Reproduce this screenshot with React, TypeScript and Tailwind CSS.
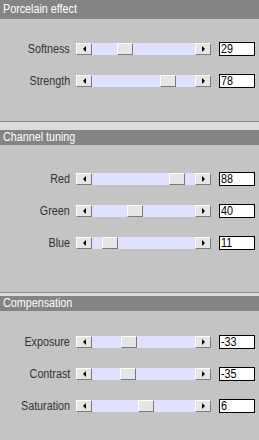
import React from "react";

const font = { fontFamily: '"Liberation Sans", Arial, sans-serif' };

function Btn({ dir }: { dir: "l" | "r" }) {
  return (
    <div className="w-[16px] h-[12px] bg-[#e6e6e6] border border-t-white border-l-white border-r-[#7a7a7a] border-b-[#7a7a7a] flex items-center justify-center shrink-0">
      {dir === "l" ? (
        <div className="w-0 h-0 border-y-[3px] border-y-transparent border-r-[3px] border-r-black" />
      ) : (
        <div className="w-0 h-0 border-y-[3px] border-y-transparent border-l-[3px] border-l-black" />
      )}
    </div>
  );
}

function Row({
  label,
  value,
  min,
  max,
}: {
  label: string;
  value: number;
  min: number;
  max: number;
}) {
  const frac = (value - min) / (max - min);
  const left = Math.round(frac * 87);
  return (
    <div className="h-[32px] flex items-center">
      <div className="w-[70px] flex justify-end shrink-0">
        <span className="text-[12.5px] text-[#333] leading-none scale-x-[0.86] origin-right whitespace-nowrap">
          {label}
        </span>
      </div>
      <div className="ml-[6px] flex w-[135px] h-[12px]">
        <Btn dir="l" />
        <div className="relative flex-1 bg-[#e0e0ff]">
          <div
            className="absolute top-0 w-[16px] h-[12px] bg-[#e6e6e6] border border-t-white border-l-white border-r-[#7a7a7a] border-b-[#7a7a7a]"
            style={{ left }}
          />
        </div>
        <Btn dir="r" />
      </div>
      <div className="ml-[8px] w-[36px] h-[14px] bg-white border border-black flex items-center pl-[1px] overflow-hidden">
        <span className="text-[12.5px] text-black leading-none scale-x-[0.86] origin-left">
          {value}
        </span>
      </div>
    </div>
  );
}

function Header({ title, h }: { title: string; h: string }) {
  return (
    <div className={`bg-[#848484] flex items-center pl-[3px] ${h}`}>
      <span className="text-[12.5px] text-white leading-none scale-x-[0.86] origin-left whitespace-nowrap">
        {title}
      </span>
    </div>
  );
}

function Sep({ band }: { band: string }) {
  return (
    <div>
      <div className="h-[1px] bg-[#8c8c8c]" />
      <div className={`bg-[#dcdcdc] ${band}`} />
    </div>
  );
}

export default function App() {
  return (
    <div className="w-[259px] h-[440px] bg-[#c4c4c4] overflow-hidden" style={font}>
      <Header title="Porcelain effect" h="h-[19px]" />
      <div className="pt-[14px] pb-[24px]">
        <Row label="Softness" value={29} min={0} max={100} />
        <Row label="Strength" value={78} min={0} max={100} />
      </div>
      <Sep band="h-[8px]" />
      <Header title="Channel tuning" h="h-[15px]" />
      <div className="pt-[18px] pb-[33px]">
        <Row label="Red" value={88} min={0} max={100} />
        <Row label="Green" value={40} min={0} max={100} />
        <Row label="Blue" value={11} min={0} max={100} />
      </div>
      <Sep band="h-[3px]" />
      <Header title="Compensation" h="h-[15px]" />
      <div className="pt-[15px]">
        <Row label="Exposure" value={-33} min={-100} max={100} />
        <Row label="Contrast" value={-35} min={-100} max={100} />
        <Row label="Saturation" value={6} min={-100} max={100} />
      </div>
    </div>
  );
}
